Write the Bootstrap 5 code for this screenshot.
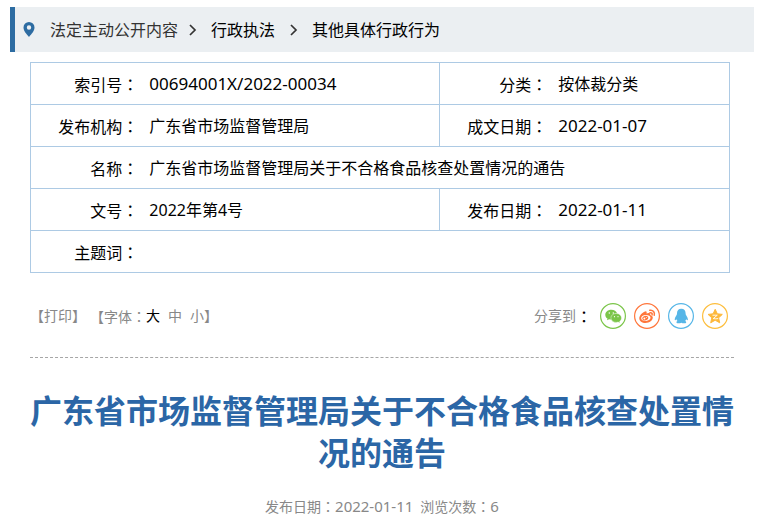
<!DOCTYPE html>
<html lang="zh-CN">
<head>
<meta charset="utf-8">
<meta name="viewport" content="width=device-width, initial-scale=1">
<title>广东省市场监督管理局关于不合格食品核查处置情况的通告</title>
<link href="https://cdn.jsdelivr.net/npm/bootstrap@5.3.0/dist/css/bootstrap.min.css" rel="stylesheet">
<style>
  body { font-family: "Noto Sans", "Noto Sans CJK SC", sans-serif; font-size: 16px; line-height: 24px; color: #000; background: #fff; }
  .crumb-bar { margin: 7px 5px 10px 10px; min-height: 45px; padding-left: 8px; background: #ebeff2; border-left: 5px solid #2d6ca2; }
  .crumb-bar .pin { margin-right: 15px; }
  .crumb-bar a { color: #000; text-decoration: none; }
  .crumb-bar .crumb-root { color: #333; }
  .crumb-sep { margin-right: 14px; margin-left: 14px; }
  .crumb-root + .crumb-sep { margin-left: 10px; }
  .page-body { padding: 0 25px 0 30px; }
  .info-table { table-layout: fixed; border-collapse: collapse; }
  .info-table th, .info-table td { height: 42px; padding: 1px 0 0; border: 1px solid #adcae4; font-weight: 400; vertical-align: middle; }
  .info-table th { padding-right: 11px; text-align: right; border-right: 0; }
  .info-table td { border-left: 0; }
  .w-label { width: 17%; }
  .w-value { width: 41.5%; }
  .colon { font-family: "Noto Sans CJK TC", sans-serif; }
  .num { font-size: 17px; }
  .tools { margin-top: 30px; padding-bottom: 28px; border-bottom: 1px dashed #a6a6a6; font-size: 14px; color: #888; }
  .tools button { padding: 0; border: 0; background: none; color: inherit; }
  .tools .size-current { color: #000; }
  .tools .share-colon { font-size: 16px; color: #000; }
  .share-list { gap: 8px; margin: 0 6px 0 8px; }
  .share-list svg { display: block; }
  .doc-title { margin: 32px 0 0; font-size: 32px; line-height: 42px; font-weight: 700; color: #2b66a6; text-align: center; }
  .doc-meta { margin: 20px 0 0; font-size: 14px; color: #888; text-align: center; }
  .doc-meta .num { font-size: 15px; }
</style>
</head>
<body>
<nav class="crumb-bar d-flex align-items-center flex-wrap" aria-label="当前位置">
  <svg class="pin" width="12" height="15" viewBox="0 0 12 15" aria-hidden="true"><path fill="#2d6ca2" fill-rule="evenodd" d="M6 0a5.500 5.500 0 0 0-5.500 5.500C.5 9 3.500 12 6 15c2.500-3 5.500-6 5.500-9.500A5.500 5.500 0 0 0 6 0Zm0 3.300a2.200 2.200 0 1 1 0 4.400 2.200 2.200 0 0 1 0-4.400Z"/></svg>
  <a class="crumb-root" href="#">法定主动公开内容</a>
  <svg class="crumb-sep" width="9" height="12" viewBox="0 0 9 12" aria-hidden="true"><path d="M2 1l5 5-5 5" fill="none" stroke="#333" stroke-width="1.700"/></svg>
  <a href="#">行政执法</a>
  <svg class="crumb-sep" width="9" height="12" viewBox="0 0 9 12" aria-hidden="true"><path d="M2 1l5 5-5 5" fill="none" stroke="#333" stroke-width="1.700"/></svg>
  <a href="#">其他具体行政行为</a>
</nav>

<main class="page-body">
  <div class="pe-1">
    <table class="info-table w-100">
      <colgroup><col class="w-label"><col class="w-value"><col class="w-label"><col></colgroup>
      <tbody>
        <tr><th scope="row">索引号<span class="colon" lang="zh-TW">：</span></th><td><span class="num">00694001X/2022-00034</span></td><th scope="row">分类<span class="colon" lang="zh-TW">：</span></th><td>按体裁分类</td></tr>
        <tr><th scope="row">发布机构<span class="colon" lang="zh-TW">：</span></th><td>广东省市场监督管理局</td><th scope="row">成文日期<span class="colon" lang="zh-TW">：</span></th><td><span class="num">2022-01-07</span></td></tr>
        <tr><th scope="row">名称<span class="colon" lang="zh-TW">：</span></th><td colspan="3">广东省市场监督管理局关于不合格食品核查处置情况的通告</td></tr>
        <tr><th scope="row">文号<span class="colon" lang="zh-TW">：</span></th><td>2022年第4号</td><th scope="row">发布日期<span class="colon" lang="zh-TW">：</span></th><td><span class="num">2022-01-11</span></td></tr>
        <tr><th scope="row">主题词<span class="colon" lang="zh-TW">：</span></th><td colspan="3"></td></tr>
      </tbody>
    </table>
  </div>

  <div class="tools d-flex justify-content-between align-items-center flex-wrap">
    <div class="d-flex align-items-center">
      <span>【<button type="button">打印</button>】</span>
      <span class="ms-1">【字体<span class="colon" lang="zh-TW">：</span></span>
      <span class="d-flex gap-2"><button type="button" class="size-current">大</button><button type="button">中</button><button type="button">小</button></span>
      <span>】</span>
    </div>
    <div class="d-flex align-items-center">
      <span>分享到</span><span class="colon share-colon" lang="zh-TW">：</span>
      <div class="share-list d-flex">
        <a href="#" aria-label="微信"><svg width="26" height="26" viewBox="0 0 26 26"><circle cx="13" cy="13" r="12.400" fill="#fff" stroke="#7bc549" stroke-width="1.200"/><path fill="#7bc549" d="M11.300 6.700c-3.400 0-6 2.200-6 5 0 1.600.8 3 2.200 3.900L7 17.300l2.100-1c.7.2 1.500.3 2.300.3-1-4 2.100-6.400 5.800-6.200-.7-2.200-3-3.700-5.900-3.700Z"/><path fill="#7bc549" stroke="#fff" stroke-width=".4" d="M16.200 10.400c-3 0-5.300 2-5.300 4.500s2.300 4.500 5.300 4.500c.7 0 1.300-.1 1.900-.3l2 1-.5-1.700c1.200-.8 1.900-2 1.900-3.500 0-2.500-2.300-4.500-5.300-4.500Z"/><g fill="#fff"><circle cx="9.300" cy="10" r=".7"/><circle cx="13.300" cy="10" r=".7"/><circle cx="14.500" cy="13.700" r=".6"/><circle cx="18" cy="13.700" r=".6"/></g></svg></a>
        <a href="#" aria-label="微博"><svg width="26" height="26" viewBox="0 0 26 26"><circle cx="13" cy="13" r="12.400" fill="#fff" stroke="#ff763b" stroke-width="1.200"/><path fill="#ff763b" fill-rule="evenodd" d="M11.300 8.400c1.200-.3 1.700.6 1.200 2.200 2.200-.9 4.200-.8 3.700 1.400 1.500.4 2.600 1.200 2.600 2.600 0 2.800-3.200 5.400-7.300 5.400-3.500 0-6.200-1.900-6.200-4.800 0-2.700 3.300-6.200 6-6.800Zm.4 3.700c-2.700.2-4.700 1.600-4.500 3.300.1 1.600 2.300 2.700 4.900 2.500s4.600-1.700 4.400-3.300c-.1-1.600-2.200-2.700-4.800-2.500Z"/><ellipse cx="11.300" cy="15.100" rx="3" ry="2.300" transform="rotate(-15 11.300 15.100)" fill="#ff763b"/><circle cx="10.400" cy="15.600" r="1" fill="#fff"/><circle cx="12.300" cy="14.500" r=".5" fill="#fff"/><path fill="none" stroke="#ff763b" stroke-width="1.500" stroke-linecap="round" d="M15.800 7.300c3.200-.6 5.400 2 4.400 5M16 9.700c1.500-.3 2.500.7 2.100 2.200"/></svg></a>
        <a href="#" aria-label="QQ"><svg width="26" height="26" viewBox="0 0 26 26"><circle cx="13" cy="13" r="12.400" fill="#fff" stroke="#56b6e7" stroke-width="1.200"/><path fill="#56b6e7" d="M13.300 5.800c-2.900 0-4.300 2-4.300 4.400 0 .7-.1 1.200-.4 1.800-1 1.500-1.900 3-1.900 4.500 0 .8.400 1 .9.600l.8-.8c.2.700.6 1.300 1.100 1.800-.8.300-1.100.8-1 1.300.3 1.200 3.200 1.200 4.800.4 1.600.8 4.600.8 4.900-.4.100-.6-.3-1-1.100-1.300.5-.5.900-1.100 1.100-1.800l.8.800c.5.400.9.200.9-.6 0-1.500-.9-3-1.900-4.500-.3-.6-.4-1.100-.4-1.800 0-2.400-1.400-4.400-4.300-4.400Z"/></svg></a>
        <a href="#" aria-label="QQ空间"><svg width="26" height="26" viewBox="0 0 26 26"><circle cx="13" cy="13" r="12.400" fill="#fff" stroke="#fdbe3d" stroke-width="1.200"/><path fill="#fdb83a" stroke="#fdb83a" stroke-linejoin="round" d="m13.200 6.300 2.100 4.500 5 .6-3.700 3.400 1.100 5-4.500-2.600-4.500 2.600 1.100-5-3.700-3.400 5-.6Z"/><path fill="none" stroke="#fff" stroke-width=".9" d="M10.500 12.200h4.800l-4.100 3.400c1.700.3 3.400.3 5 0"/></svg></a>
      </div>
    </div>
  </div>

  <h1 class="doc-title">广东省市场监督管理局关于不合格食品核查处置情况的通告</h1>
  <p class="doc-meta">发布日期<span class="colon" lang="zh-TW">：</span><span class="num">2022-01-11</span>&ensp;浏览次数<span class="colon" lang="zh-TW">：</span><span class="num">6</span></p>
</main>
<script src="https://cdn.jsdelivr.net/npm/bootstrap@5.3.0/dist/js/bootstrap.bundle.min.js"></script>
</body>
</html>
